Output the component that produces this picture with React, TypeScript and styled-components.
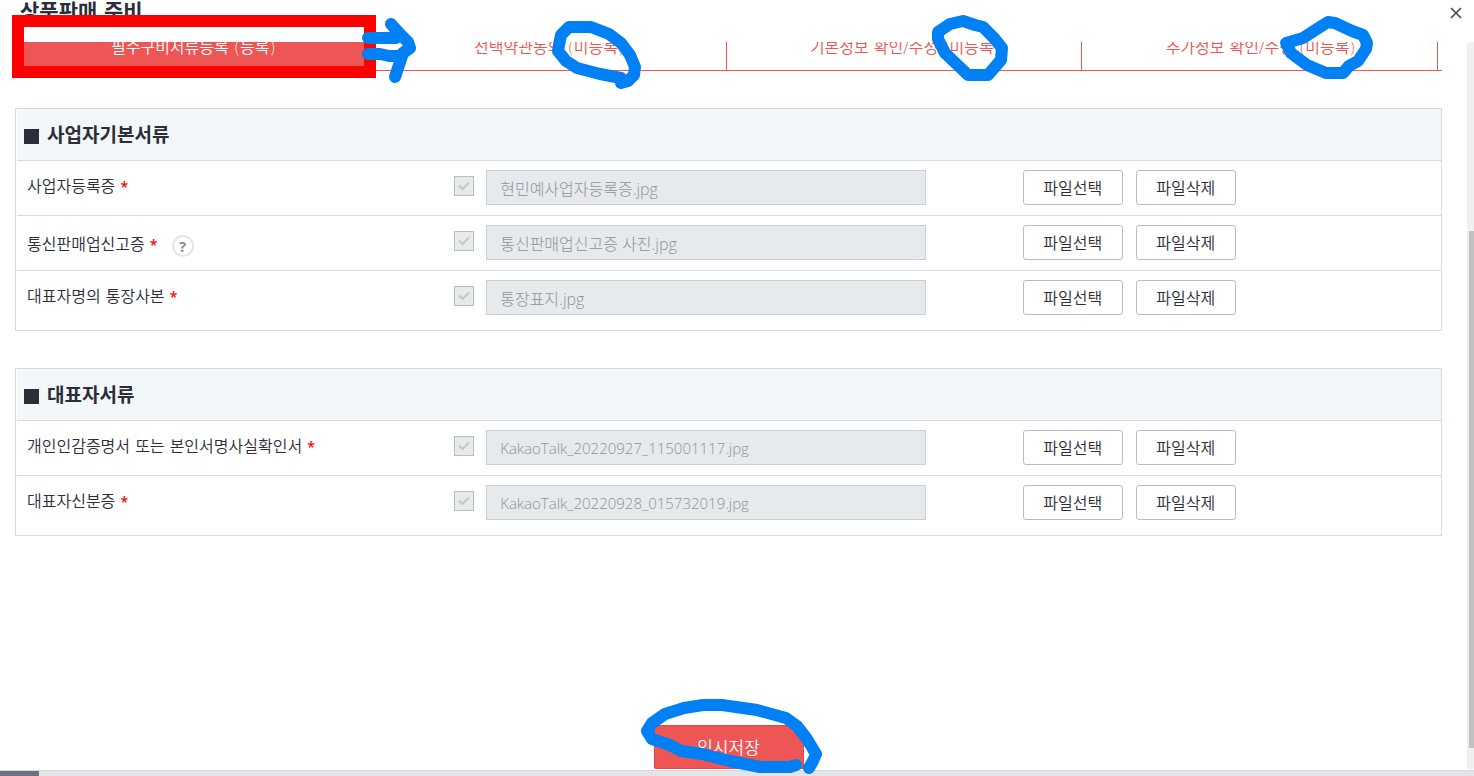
import React from "react";
import styled, { createGlobalStyle } from "styled-components";

const line = "#d5d9e0";
const ink = "#2b2e38";
const coral = "#ee5555";
const baseFont = `"Open Sans", "Noto Sans CJK KR", sans-serif`;
const wideFont = `"DejaVu Sans Light", "DejaVu Sans", "Noto Sans CJK KR", sans-serif`;

const GlobalStyle = createGlobalStyle`
  *, *::before, *::after { box-sizing: border-box; }
  html, body { margin: 0; background: #fff; overflow: hidden; }
  body, button, input {
    font-family: ${baseFont};
    font-size: 16px;
    font-weight: 350;
    color: ${ink};
  }
`;

const Dialog = styled.div`
  position: relative;
  display: flex;
  flex-direction: column;
  height: 100vh;
  overflow: hidden;
`;

const Header = styled.header`
  display: flex;
  flex: none;
  justify-content: space-between;
  align-items: flex-start;
  height: 42px;
  padding: 0 11px 0 20px;
`;

const Title = styled.h1`
  margin: 0;
  font-family: ${wideFont};
  font-size: 21px;
  line-height: 24px;
  font-weight: 700;
`;

const CloseButton = styled.button`
  display: flex;
  margin: 6px 0 0;
  padding: 0;
  border: 0;
  background: none;
`;

const Viewport = styled.div`
  display: flex;
  flex: 1;
  min-height: 0;
`;

const Content = styled.main`
  flex: 1;
  min-width: 0;
  overflow: hidden;
  padding: 0 25px 0 15px;
`;

const Scrollbar = styled.div`
  display: flex;
  flex-direction: column;
  flex: none;
  width: 7px;
  padding-left: 2px;
  background: #f0f0f0;
`;

const TrackPart = styled.div<{ $share: number; $thumb?: boolean }>`
  flex: ${(p) => p.$share} 0 0;
  background: ${(p) => (p.$thumb ? "#c1c1c1" : "transparent")};
`;

const Tabs = styled.nav`
  display: flex;
  align-items: flex-end;
  height: 29px;
  margin-bottom: 37px;
  padding-right: 4px;
  overflow: hidden;
  border-bottom: 1px solid ${coral};
`;

const Tab = styled.button<{ $active?: boolean }>`
  flex: 1;
  flex-shrink: 0;
  height: 48px;
  padding: 4px 0 0 2px;
  border: 0;
  border-right: 1px solid ${coral};
  background: ${(p) => (p.$active ? coral : "#fff")};
  color: ${(p) => (p.$active ? "#fff" : coral)};
  font-family: ${wideFont};
  line-height: 24px;
`;

const Group = styled.section`
  margin-bottom: 37px;
  border: 1px solid ${line};
`;

const GroupTitle = styled.h2`
  display: flex;
  align-items: center;
  gap: 8px;
  height: 52px;
  margin: 0 0 0 1px;
  padding-left: 7px;
  border-bottom: 1px solid ${line};
  background: #f3f7fa;
  font-size: 19px;
  line-height: 28px;
  font-weight: 700;
`;

const Square = styled.span`
  width: 15px;
  height: 15px;
  margin-top: 4px;
  background: ${ink};
`;

const Row = styled.div`
  display: grid;
  grid-template-columns: 3fr 4fr 3fr;
  align-items: start;
  margin-left: 1px;
  padding: 9px 0 10px;
  border-bottom: 1px solid ${line};
  &:last-child {
    padding-bottom: 15px;
    border-bottom: 0;
  }
`;

const LabelCell = styled.div<{ $help?: boolean }>`
  display: flex;
  gap: 14px;
  align-items: flex-start;
  height: 35px;
  padding: ${(p) => (p.$help ? "3px 10px 0" : "0 10px")};
  font-family: ${wideFont};
  line-height: 34px;
`;

const Required = styled.span`
  color: #f00;
  font-family: ${baseFont};
  font-size: 14px;
  font-weight: 600;
`;

const HelpButton = styled.button`
  width: 22px;
  height: 22px;
  margin-top: 7px;
  padding: 0;
  border: 2px solid #e2e5eb;
  border-radius: 50%;
  background: #fff;
  color: #8b8f98;
  font-size: 15px;
  line-height: 18px;
  font-weight: 700;
`;

const FileCell = styled.div`
  display: flex;
  gap: 12px;
  padding: 0 10px;
`;

const CheckWrap = styled.span`
  display: grid;
  flex: none;
  width: 20px;
  height: 20px;
  margin-top: 6px;
  & > * { grid-area: 1 / 1; }
`;

const CheckBox = styled.input`
  appearance: none;
  width: 20px;
  height: 20px;
  margin: 0;
  border: 1px solid #b9bec2;
  background: #e6eaed;
`;

const FileName = styled.input<{ $latin?: boolean }>`
  width: 440px;
  height: 35px;
  padding: 0 13px;
  border: 1px solid #cbcdd9;
  border-radius: 0;
  background: #e6eaed;
  color: #8f9399;
  font-size: ${(p) => (p.$latin ? "15px" : "16px")};
  font-weight: 300;
`;

const ButtonCell = styled.div`
  display: flex;
  gap: 13px;
  padding: 0 9px;
`;

const FileButton = styled.button`
  width: 100px;
  height: 35px;
  padding: 0 0 2px;
  border: 1px solid #bbbcc4;
  border-radius: 3px;
  background: #fff;
`;

const Actions = styled.div`
  display: flex;
  justify-content: center;
  padding-top: 152px;
`;

const SaveButton = styled.button`
  width: 150px;
  height: 44px;
  padding: 0 0 2px;
  border: 1px solid #dc4a4a;
  border-radius: 2px;
  background: ${coral};
  color: #fff;
  font-size: 17px;
`;

const Footer = styled.footer`
  flex: none;
  height: 6px;
  margin-top: 1px;
  border-top: 1px solid #d3d8df;
  background: #e3e5e8;
`;

const FooterMark = styled.div`
  width: 39px;
  height: 5px;
  background: #6f7284;
`;

const Markup = styled.svg`
  position: absolute;
  top: 0;
  left: 0;
  pointer-events: none;
`;

interface Doc {
  id: string;
  label: string;
  file: string;
  help?: boolean;
  latin?: boolean;
}

const groups: { title: string; docs: Doc[] }[] = [
  {
    title: "사업자기본서류",
    docs: [
      { id: "business", label: "사업자등록증", file: "현민예사업자등록증.jpg" },
      { id: "mailorder", label: "통신판매업신고증", file: "통신판매업신고증 사진.jpg", help: true },
      { id: "bankbook", label: "대표자명의 통장사본", file: "통장표지.jpg" },
    ],
  },
  {
    title: "대표자서류",
    docs: [
      { id: "seal", label: "개인인감증명서 또는 본인서명사실확인서", file: "KakaoTalk_20220927_115001117.jpg", latin: true },
      { id: "idcard", label: "대표자신분증", file: "KakaoTalk_20220928_015732019.jpg", latin: true },
    ],
  },
];

const tabs = [
  "필수구비서류등록 (등록)",
  "선택약관동의 (미등록)",
  "기본정보 확인/수정 (미등록)",
  "추가정보 확인/수정 (미등록)",
];

function DocRow({ doc }: { doc: Doc }) {
  return (
    <Row>
      <LabelCell $help={doc.help}>
        <label htmlFor={doc.id}>
          {doc.label} <Required>*</Required>
        </label>
        {doc.help && <HelpButton type="button">?</HelpButton>}
      </LabelCell>
      <FileCell>
        <CheckWrap>
          <CheckBox type="checkbox" defaultChecked disabled aria-label={doc.label} />
          <svg width="20" height="20" viewBox="0 0 20 20" fill="none" stroke="#c3c8cc" strokeWidth="2">
            <path d="M5 9.5 L8.5 13 L15 6.5" />
          </svg>
        </CheckWrap>
        <FileName id={doc.id} type="text" defaultValue={doc.file} $latin={doc.latin} disabled />
      </FileCell>
      <ButtonCell>
        <FileButton type="button">파일선택</FileButton>
        <FileButton type="button">파일삭제</FileButton>
      </ButtonCell>
    </Row>
  );
}

export default function App() {
  return (
    <Dialog>
      <GlobalStyle />
      <Header>
        <Title>상품판매 준비</Title>
        <CloseButton type="button" aria-label="닫기">
          <svg width="14" height="14" viewBox="0 0 14 14" stroke="#4a4d55" strokeWidth="1.7">
            <path d="M2 2 L12 12 M12 2 L2 12" />
          </svg>
        </CloseButton>
      </Header>
      <Viewport>
        <Content>
          <Tabs>
            {tabs.map((t, i) => (
              <Tab key={t} type="button" $active={i === 0}>
                {t}
              </Tab>
            ))}
          </Tabs>
          {groups.map((g) => (
            <Group key={g.title}>
              <GroupTitle>
                <Square />
                {g.title}
              </GroupTitle>
              {g.docs.map((d) => (
                <DocRow key={d.id} doc={d} />
              ))}
            </Group>
          ))}
          <Actions>
            <SaveButton type="button">임시저장</SaveButton>
          </Actions>
        </Content>
        <Scrollbar>
          <TrackPart $share={189} />
          <TrackPart $share={517} $thumb />
          <TrackPart $share={21} />
        </Scrollbar>
      </Viewport>
      <Footer>
        <FooterMark />
      </Footer>
      <Markup width="1474" height="776" viewBox="0 0 1474 776" fill="none" aria-hidden="true">
        <rect x="18" y="21" width="352" height="51" stroke="#ff0000" strokeWidth="12" />
        <g stroke="#0080f5" strokeWidth="12" strokeLinecap="round" strokeLinejoin="round">
          <path d="M368 38 H396 M368 54 H380 L389 56 H398 M391 24 L400 34 L408 42 L410 48 L403 53 L399 65 L395 77" />
          <path d="M621 83 L628 81 L634 75 L635 67 L630 55 L621 43 L609 34 L591 27 H569 L561 35 L559 45 L558 51 L566 61 L577 68 L600 74 L621 78" />
          <path d="M963 21 L950 24 L938 32 V39 L945 53 L968 75 H988 L1001 60 L1002 48 L994 38 L983 27 L975 25 Z" />
          <path d="M1303 38 L1320 27 L1328 22 L1335 23 L1352 31 L1363 35 L1367 43 L1366 49 L1358 61 L1349 66 L1343 73 H1326 L1307 65 L1291 53 L1286 43 Z" />
          <path d="M809 768 L813 761 L816 754 L807 739 L797 726 L786 718 L757 710 L722 705 H703 L684 708 L665 714 L652 723 L647 731 L652 739 L670 745 L681 751 L702 754 L730 761 L760 767 H790 L796 765" />
        </g>
      </Markup>
    </Dialog>
  );
}
